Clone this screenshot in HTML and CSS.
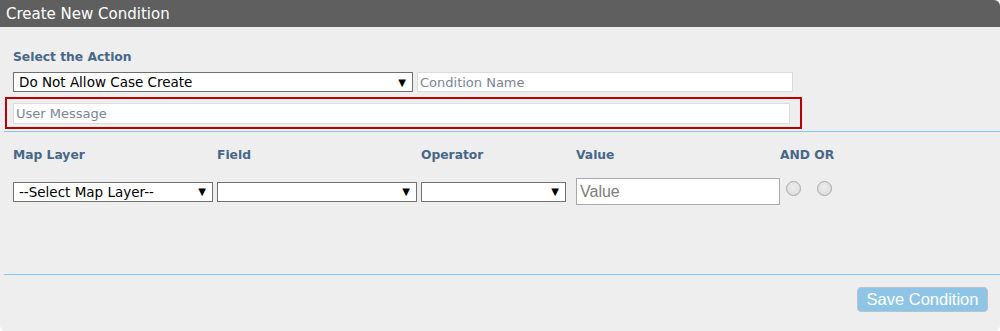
FILE: index.html
```html
<!DOCTYPE html>
<html>
<head>
<meta charset="utf-8">
<link rel="stylesheet" href="styles.css">
</head>
<body>
<div class="panel">
  <div class="panel-head">Create New Condition</div>
  <div class="panel-body">
    <div class="section">
      <div class="label action-label">Select the Action</div>
      <div class="row1">
        <div class="select action-select"><span>Do Not Allow Case Create</span><span class="arrow">▼</span></div>
        <div class="input cond-name">Condition Name</div>
      </div>
      <div class="error-box">
        <div class="input user-msg">User Message</div>
      </div>
    </div>
    <div class="divider"></div>
    <div class="grid">
      <div class="label">Map Layer</div>
      <div class="label">Field</div>
      <div class="label">Operator</div>
      <div class="label">Value</div>
      <div class="label">AND OR</div>
      <div class="select c1"><span>--Select Map Layer--</span><span class="arrow">▼</span></div>
      <div class="select c2"><span></span><span class="arrow">▼</span></div>
      <div class="select c3"><span></span><span class="arrow">▼</span></div>
      <div class="value-input">Value</div>
      <div class="radios"><span class="radio"></span><span class="radio"></span></div>
    </div>
    <div class="divider"></div>
    <div class="footer">
      <button class="save">Save Condition</button>
    </div>
  </div>
</div>
</body>
</html>
```
FILE: styles.css
```css
html, body {
  margin: 0;
  padding: 0;
  background: #ffffff;
}
body {
  width: 1000px;
  height: 331px;
  font-family: "DejaVu Sans", Verdana, sans-serif;
}
.panel {
  width: 1000px;
  height: 331px;
  background: #eeeeee;
  border-radius: 0 6px 6px 6px;
  overflow: hidden;
  display: flex;
  flex-direction: column;
}
.panel-head {
  height: 27px;
  background: #5f5f5f;
  color: #ffffff;
  font-size: 15px;
  line-height: 29px;
  padding-left: 6px;
  flex: none;
}
.panel-body {
  flex: 1;
  display: flex;
  flex-direction: column;
}
.section {
  padding: 22px 0 0 5px;
  height: 82px;
  flex: none;
}
.label {
  color: #476788;
  font-weight: bold;
  font-size: 12.3px;
  line-height: 16px;
}
.action-label {
  padding-left: 8px;
  margin-bottom: 7px;
}
.row1 {
  display: flex;
  gap: 4px;
  padding-left: 8px;
}
.select {
  box-sizing: border-box;
  height: 20px;
  background: #ffffff;
  border: 1px solid #707070;
  display: flex;
  justify-content: space-between;
  align-items: center;
  padding: 0 6px 0 5px;
  font-size: 13.5px;
  color: #000000;
}
.arrow {
  font-size: 10px;
  font-family: "DejaVu Sans", sans-serif;
}
.action-select {
  width: 400px;
}
.input {
  box-sizing: border-box;
  background: #ffffff;
  border: 1px solid #dcdcdc;
  color: #7a8595;
  font-size: 13px;
  display: flex;
  align-items: center;
  padding-left: 2px;
}
.cond-name {
  width: 376px;
  height: 20px;
}
.error-box {
  box-sizing: border-box;
  width: 797px;
  height: 32px;
  margin-top: 5px;
  border: 2px solid #b80000;
  padding: 4px 0 0 6px;
}
.user-msg {
  width: 777px;
  height: 21px;
}
.divider {
  flex: none;
  margin-left: 4px;
  height: 0;
  border-top: 1px solid #7ec8f2;
}
.grid {
  flex: none;
  display: grid;
  grid-template-columns: 204px 204px 155px 204px auto;
  grid-template-rows: 16px 27px;
  row-gap: 15px;
  padding: 15px 0 0 13px;
  height: 142px;
  box-sizing: border-box;
  align-items: center;
}
.c1 { width: 200px; }
.c2 { width: 200px; }
.c3 { width: 145px; }
.value-input {
  box-sizing: border-box;
  width: 204px;
  height: 27px;
  background: #ffffff;
  border: 1px solid #a9a9a9;
  font-family: "Liberation Sans", Arial, sans-serif;
  font-size: 16px;
  color: #7d7d7d;
  padding-left: 3px;
  display: flex;
  align-items: center;
}
.radios {
  display: flex;
  gap: 16px;
  padding-left: 6px;
  align-self: start;
  padding-top: 3px;
}
.radio {
  box-sizing: border-box;
  width: 15px;
  height: 15px;
  border-radius: 50%;
  border: 1px solid #a8a8a8;
  background: radial-gradient(circle at 50% 40%, #eeeeee, #d8d8d8);
}
.footer {
  display: flex;
  justify-content: flex-end;
  padding: 12px 12px 0 0;
}
.save {
  width: 131px;
  height: 25px;
  background: #8ec5e6;
  border: 1px solid #b8c4cc;
  border-radius: 4px;
  color: #ffffff;
  font-family: "Liberation Sans", Arial, sans-serif;
  font-size: 16.5px;
  padding: 0;
}
```
